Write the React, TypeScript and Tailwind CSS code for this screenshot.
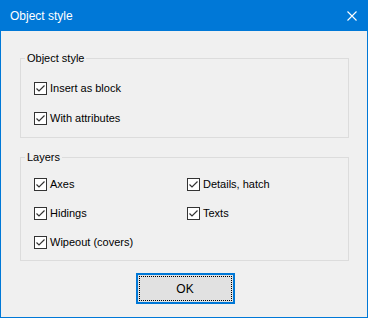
import React from 'react';

// Small win10-style checked checkbox with label
const Check = ({ label }: { label: string }) => (
  <label className="flex items-center h-[13px] gap-[3px] text-black">
    <span className="flex items-center justify-center w-[13px] h-[13px] border border-[#333333] bg-white shrink-0">
      <svg width="11" height="11" viewBox="0 0 11 11">
        <path d="M1.5 5.5 L4 8 L9.5 2.5" fill="none" stroke="#333333" strokeWidth="1.2" />
      </svg>
    </span>
    <span className="leading-[15px]">{label}</span>
  </label>
);

const App: React.FC = () => {
  return (
    <div
      className="w-[368px] h-[318px] flex flex-col bg-[#f0f0f0] text-[11px]"
      style={{ fontFamily: '"Liberation Sans", Arial, sans-serif' }}
    >
      {/* Title bar */}
      <div className="h-[31px] shrink-0 bg-[#0078d7] flex items-center justify-between pl-[10px] pr-[11px]">
        <span className="text-white text-[12px]">Object style</span>
        <svg width="10" height="10" viewBox="0 0 10 10">
          <path d="M0.5 0.5 L9.5 9.5 M9.5 0.5 L0.5 9.5" stroke="#ffffff" strokeWidth="1.1" />
        </svg>
      </div>
      {/* Body */}
      <div className="flex-1 flex flex-col border-x border-b border-[#0078d7] px-[19px]">
        <fieldset className="mt-[20px] border border-[#dcdcdc] w-[329px] pl-[13px] pt-[17px] pb-[12px] flex flex-col gap-[17px]">
          <legend className="ml-[-9px] px-[2px] leading-[14px] text-black">Object style</legend>
          <Check label="Insert as block" />
          <Check label="With attributes" />
        </fieldset>
        <fieldset className="mt-[12px] border border-[#dcdcdc] w-[329px] pl-[13px] pt-[14px] pb-[11px]">
          <legend className="ml-[-9px] px-[2px] leading-[14px] text-black">Layers</legend>
          <div className="grid grid-cols-[153px_1fr] gap-y-[16px]">
            <Check label="Axes" />
            <Check label="Details, hatch" />
            <Check label="Hidings" />
            <Check label="Texts" />
            <Check label="Wipeout (covers)" />
          </div>
        </fieldset>
        <div className="flex justify-center mt-[12px] pl-[2px]">
          <button className="w-[99px] h-[31px] border-2 border-[#0078d7] bg-[#e1e1e1] p-[1px] flex">
            <span className="flex-1 flex items-center justify-center border border-dotted border-black text-black text-[12px]">
              OK
            </span>
          </button>
        </div>
      </div>
    </div>
  );
};

export default App;
